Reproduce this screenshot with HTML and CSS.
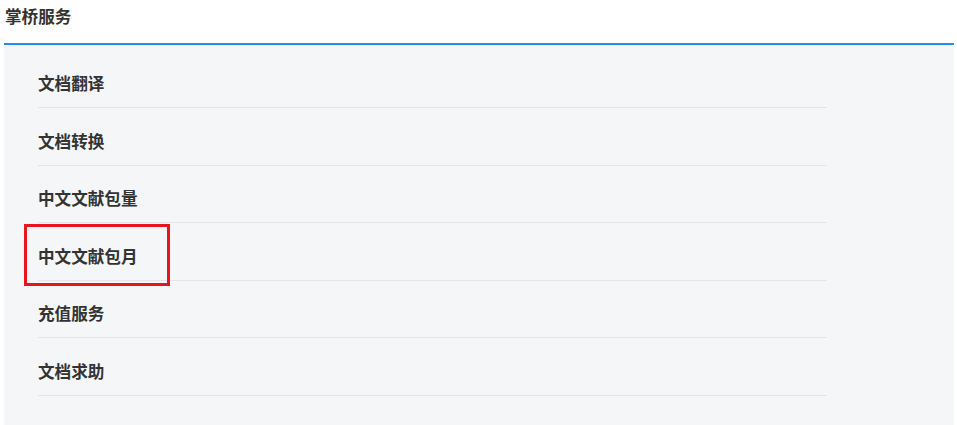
FILE: index.html
```html
<!DOCTYPE html>
<html lang="zh">
<head>
<meta charset="utf-8">
<link rel="stylesheet" href="styles.css">
</head>
<body>
<div class="wrap">
  <div class="title">掌桥服务</div>
  <div class="panel">
    <ul class="list">
      <li class="item">文档翻译</li>
      <li class="item">文档转换</li>
      <li class="item">中文文献包量</li>
      <li class="item highlighted">中文文献包月<span class="mark"></span></li>
      <li class="item">充值服务</li>
      <li class="item">文档求助</li>
    </ul>
  </div>
</div>
</body>
</html>
```
FILE: styles.css
```css
html, body {
  margin: 0;
  padding: 0;
  background: #fff;
}
body {
  font-family: "Noto Sans CJK SC", "Noto Sans", sans-serif;
  color: #333;
}
.wrap {
  margin: 0 3px 0 4px;
}
.title {
  height: 43px;
  line-height: 32px;
  padding-left: 1px;
  font-size: 16.6px;
  font-weight: 700;
  color: #333;
  border-bottom: 2px solid #1e8ef2;
}
.panel {
  background: #f5f6f8;
  padding: 5.5px 0 40px 34px;
}
.list {
  list-style: none;
  margin: 0;
  padding: 0;
  width: 789px;
}
.item {
  position: relative;
  box-sizing: border-box;
  height: 57.5px;
  line-height: 24px;
  padding-top: 20.5px;
  font-size: 16.6px;
  font-weight: 700;
  color: #333;
  border-bottom: 1px solid #e4e5e7;
}
.mark {
  position: absolute;
  left: -14px;
  top: 1px;
  width: 146px;
  height: 62px;
  box-sizing: border-box;
  border: 3px solid #e8141f;
}
```
